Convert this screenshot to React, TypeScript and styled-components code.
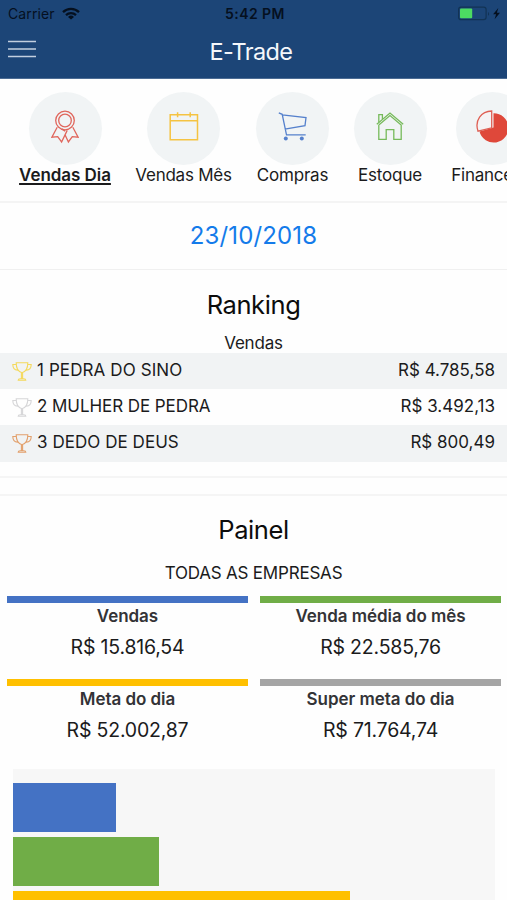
import React from "react";
import styled, { createGlobalStyle } from "styled-components";

const GlobalStyle = createGlobalStyle`
  * { box-sizing: border-box; }
  html, body { margin: 0; padding: 0; background: #fefefe; overflow: hidden; }
  body { font-family: Inter, "Liberation Sans", sans-serif; color: #1b1b1c; }
  svg { display: block; flex: none; }
`;

const Screen = styled.div`
  width: 507px;
  height: 900px;
  overflow: hidden;
  display: flex;
  flex-direction: column;
  background: #fefefe;
`;

const Header = styled.header`
  flex: none;
  height: 79px;
  background: #1c4577;
  border-bottom: 1px solid #4c6c94;
`;

const StatusBar = styled.div`
  height: 27px;
  display: grid;
  grid-template-columns: 1fr auto 1fr;
  align-items: center;
  padding: 0 5px 0 8px;
  color: #05101f;
`;

const Carrier = styled.div`
  display: flex;
  align-items: center;
  gap: 7px;
  font-size: 14px;
  letter-spacing: 0.1px;
`;

const Clock = styled.div`
  font-size: 14px;
  font-weight: 600;
  letter-spacing: 0.45px;
`;

const Power = styled.div`
  display: flex;
  justify-content: flex-end;
`;

const NavBar = styled.div`
  height: 48px;
  display: grid;
  grid-template-columns: 1fr auto 1fr;
  align-items: center;
  padding: 0 13px 0 8px;
`;

const MenuButton = styled.button`
  border: 0;
  padding: 0 0 4px;
  background: none;
  justify-self: start;
`;

const AppTitle = styled.h1`
  margin: 0;
  color: #f4f7fb;
  font-size: 23.5px;
  font-weight: 400;
  letter-spacing: -0.6px;
`;

const Tabs = styled.nav`
  flex: none;
  height: 124px;
  display: flex;
  gap: 24.5px;
  padding: 12.5px 0 0 19px;
  border-bottom: 2px solid #f4f4f4;
`;

const Tab = styled.div<{ $width: number }>`
  flex: none;
  width: ${(p) => p.$width}px;
  display: flex;
  flex-direction: column;
  align-items: center;
`;

const TabCircle = styled.div`
  width: 73px;
  height: 73px;
  padding-bottom: 3px;
  border-radius: 50%;
  background: #f1f4f5;
  display: flex;
  align-items: center;
  justify-content: center;
`;

const TabLabel = styled.span<{ $active?: boolean; $spacing: number }>`
  line-height: 21px;
  font-size: 17px;
  white-space: nowrap;
  letter-spacing: ${(p) => p.$spacing}px;
  font-weight: ${(p) => (p.$active ? 600 : 400)};
  text-decoration: ${(p) => (p.$active ? "underline" : "none")};
  text-decoration-thickness: 1.5px;
  text-underline-offset: 1.5px;
`;

const DateBar = styled.div`
  flex: none;
  height: 67px;
  padding-bottom: 2px;
  border-bottom: 1px solid #f0f0f0;
  display: flex;
  align-items: center;
  justify-content: center;
  color: #147bea;
  font-size: 24px;
  letter-spacing: 0.15px;
`;

const Ranking = styled.section`
  flex: none;
  height: 208px;
  padding-top: 17px;
  border-bottom: 2px solid #f5f5f5;
`;

const Heading = styled.h2`
  margin: 0;
  height: 36px;
  line-height: 36px;
  font-size: 25.5px;
  font-weight: 400;
  letter-spacing: -0.4px;
  text-align: center;
  color: #0c0c0c;
`;

const Caption = styled.div<{ $top: number; $height: number }>`
  padding-top: ${(p) => p.$top}px;
  height: ${(p) => p.$height}px;
  line-height: 20px;
  font-size: 17px;
  letter-spacing: -0.2px;
  text-align: center;
`;

const RankRow = styled.div<{ $shaded: boolean }>`
  height: 36.2px;
  padding: 0 12px;
  display: flex;
  align-items: center;
  background: ${(p) => (p.$shaded ? "#f1f3f4" : "#fefefe")};
`;

const RankName = styled.span<{ $spacing: number }>`
  flex: 1;
  margin-left: 5px;
  font-size: 17px;
  letter-spacing: ${(p) => p.$spacing}px;
  padding-bottom: 2px;
`;

const RankValue = styled.span`
  font-size: 17px;
  letter-spacing: 0;
  padding-bottom: 2px;
`;

const Separator = styled.div`
  flex: none;
  height: 18px;
  border-bottom: 2px solid #f5f5f5;
`;

const Panel = styled.section`
  padding-top: 16px;
`;

const Metrics = styled.div`
  display: grid;
  grid-template-columns: 241px 241px;
  column-gap: 12px;
  row-gap: 0;
  padding-left: 7px;
`;

const Metric = styled.div<{ $color: string }>`
  height: 83.5px;
  border-top: 7px solid ${(p) => p.$color};
  text-align: center;
`;

const MetricLabel = styled.div`
  padding-top: 3px;
  line-height: 21px;
  font-size: 17px;
  font-weight: 600;
  letter-spacing: -0.05px;
  color: #333336;
`;

const MetricValue = styled.div`
  padding-top: 7px;
  line-height: 26px;
  font-size: 19.5px;
  letter-spacing: -0.2px;
`;

const Chart = styled.div`
  width: 482px;
  height: 240px;
  margin: 6px 0 0 13px;
  padding-top: 14.5px;
  display: flex;
  flex-direction: column;
  gap: 5px;
  background: #f7f7f7;
`;

const ChartBar = styled.div<{ $color: string; $width: number }>`
  flex: none;
  height: 49px;
  width: ${(p) => p.$width}px;
  background: ${(p) => p.$color};
`;

const WifiIcon = () => (
  <svg width="18" height="13" viewBox="0 0 18 13" fill="none" stroke="#05101f" strokeWidth="2.3">
    <path d="M1 5.1a11.6 11.6 0 0 1 16 0" />
    <path d="M4 8.1a7.3 7.3 0 0 1 10 0" />
    <path d="M9 12.5 6 9.9a4.5 4.5 0 0 1 6 0z" fill="#05101f" stroke="none" />
  </svg>
);

const BatteryIcon = () => (
  <svg width="45" height="16" viewBox="0 0 45 16">
    <rect x="1.6" y="1.1" width="27.5" height="12.6" rx="2.4" fill="none" stroke="#123355" strokeWidth="1.2" />
    <rect x="3" y="2.5" width="12.2" height="9.8" rx="1" fill="#4cdb62" />
    <path d="M31 6c1.4.7 1.4 3.1 0 3.8z" fill="#123355" />
    <path d="m41.3 2-5.2 6.2h3l-1.5 5 5.4-6.4h-3.1z" fill="#05101f" />
  </svg>
);

const MenuIcon = () => (
  <svg width="28" height="18" viewBox="0 0 28 18" stroke="#c2cfdf" strokeWidth="1.7">
    <path d="M0 1.5h28M0 9h28M0 16.5h28" />
  </svg>
);

const RibbonIcon = () => (
  <svg width="28" height="34" viewBox="0 0 28 34" fill="none" stroke="#e0665c" strokeWidth="1.3">
    <circle cx="14" cy="10.5" r="9.3" />
    <circle cx="14" cy="10.5" r="6.3" />
    <path d="M6.2 17.3.9 27.2l5.8-.6L10.6 32 16.2 20.4M10.6 18.9l3.6 2.2M21.8 17.3l5.3 9.9-5.8-.6L17.4 32 14 24.8" />
  </svg>
);

const CalendarIcon = () => (
  <svg width="30" height="30" viewBox="0 0 30 30" fill="none" stroke="#f5c342" strokeWidth="1.5">
    <path d="M1.2 2.7h27.3v25H1.2zM1.2 8.7h27.3M8.6.3v5M21.2.3v5" />
  </svg>
);

const CartIcon = () => (
  <svg width="30" height="30" viewBox="0 0 30 30" fill="none" stroke="#5580cc" strokeWidth="1.3">
    <path d="M.8.8 4.2 2.3 8.5 22.8h19.2M4.2 2.8l23.8 2.8-1 8-20.2 3.5" />
    <circle cx="7.8" cy="26.5" r="2" fill="#5580cc" stroke="none" />
    <circle cx="23.8" cy="26.5" r="2" fill="#5580cc" stroke="none" />
  </svg>
);

const HouseIcon = () => (
  <svg width="28" height="30" viewBox="0 0 28 30" fill="none" stroke="#77ba5b" strokeWidth="1.3">
    <path d="M.8 12.2 14 1l13.2 11.2" />
    <path d="M2.8 13v14.3h7.4v-9.6h7.6v9.6h7.4V13L14 3.6 2.8 13" />
    <path d="M2.8 10.3V2.7h3.6v4.4" />
  </svg>
);

const PieIcon = () => (
  <svg width="34" height="34" viewBox="0 0 34 34">
    <path d="M18.5 17.5V3.2A14.7 14.7 0 1 1 4.5 21.5z" fill="#df483a" />
    <path d="M16.7 1V17.8L3 21.2C-.6 10.5 6.2 1.2 16.7 1z" fill="#f5f3f4" stroke="#df5f54" strokeWidth="1.3" />
  </svg>
);

const TrophyIcon = ({ color }: { color: string }) => (
  <svg width="20" height="19" viewBox="0 0 20 19" fill="none" stroke={color} strokeWidth="1.1">
    <path d="M4.2.8h11.6c0 5.3-1.9 9-5.8 10-3.9-1-5.8-4.7-5.8-10zM4.3 2.5H.8c0 3.4 1.8 5.4 4.8 5.6M15.7 2.5h3.5c0 3.4-1.8 5.4-4.8 5.6M9.4 10.8v6M10.6 10.8v6M6.2 18.2c0-1 1-1.5 2-1.5h3.6c1 0 2 .5 2 1.5z" />
  </svg>
);

const tabs = [
  { label: "Vendas Dia", width: 92, icon: <RibbonIcon />, active: true, spacing: -0.05 },
  { label: "Vendas Mês", width: 96, icon: <CalendarIcon />, spacing: -0.25 },
  { label: "Compras", width: 73, icon: <CartIcon />, spacing: -0.2 },
  { label: "Estoque", width: 73, icon: <HouseIcon />, spacing: -0.15 },
  { label: "Financeiro", width: 82, icon: <PieIcon />, spacing: -0.25 },
];

const ranking = [
  { name: "1 PEDRA DO SINO", value: "R$ 4.785,58", trophy: "#f4d95c", spacing: 0.1 },
  { name: "2 MULHER DE PEDRA", value: "R$ 3.492,13", trophy: "#d6d6d8", spacing: -0.07 },
  { name: "3 DEDO DE DEUS", value: "R$ 800,49", trophy: "#e2a06c", spacing: 0.05 },
];

const metrics = [
  { label: "Vendas", value: "R$ 15.816,54", color: "#4472c4" },
  { label: "Venda média do mês", value: "R$ 22.585,76", color: "#70ad47" },
  { label: "Meta do dia", value: "R$ 52.002,87", color: "#ffc000" },
  { label: "Super meta do dia", value: "R$ 71.764,74", color: "#a5a5a5" },
];

const bars = [
  { color: "#4472c4", width: 103 },
  { color: "#70ad47", width: 145.5 },
  { color: "#ffc000", width: 336.5 },
];

export default function App() {
  return (
    <Screen>
      <GlobalStyle />
      <Header>
        <StatusBar>
          <Carrier>Carrier <WifiIcon /></Carrier>
          <Clock>5:42 PM</Clock>
          <Power><BatteryIcon /></Power>
        </StatusBar>
        <NavBar>
          <MenuButton aria-label="Menu"><MenuIcon /></MenuButton>
          <AppTitle>E-Trade</AppTitle>
        </NavBar>
      </Header>
      <Tabs>
        {tabs.map((t) => (
          <Tab key={t.label} $width={t.width}>
            <TabCircle>{t.icon}</TabCircle>
            <TabLabel $active={t.active} $spacing={t.spacing}>{t.label}</TabLabel>
          </Tab>
        ))}
      </Tabs>
      <DateBar>23/10/2018</DateBar>
      <Ranking>
        <Heading>Ranking</Heading>
        <Caption $top={10} $height={30}>Vendas</Caption>
        {ranking.map((r, i) => (
          <RankRow key={r.name} $shaded={i % 2 === 0}>
            <TrophyIcon color={r.trophy} />
            <RankName $spacing={r.spacing}>{r.name}</RankName>
            <RankValue>{r.value}</RankValue>
          </RankRow>
        ))}
      </Ranking>
      <Separator />
      <Panel>
        <Heading>Painel</Heading>
        <Caption $top={15} $height={47.5}>TODAS AS EMPRESAS</Caption>
        <Metrics>
          {metrics.map((m) => (
            <Metric key={m.label} $color={m.color}>
              <MetricLabel>{m.label}</MetricLabel>
              <MetricValue>{m.value}</MetricValue>
            </Metric>
          ))}
        </Metrics>
        <Chart>
          {bars.map((b) => (
            <ChartBar key={b.color} $color={b.color} $width={b.width} />
          ))}
        </Chart>
      </Panel>
    </Screen>
  );
}
